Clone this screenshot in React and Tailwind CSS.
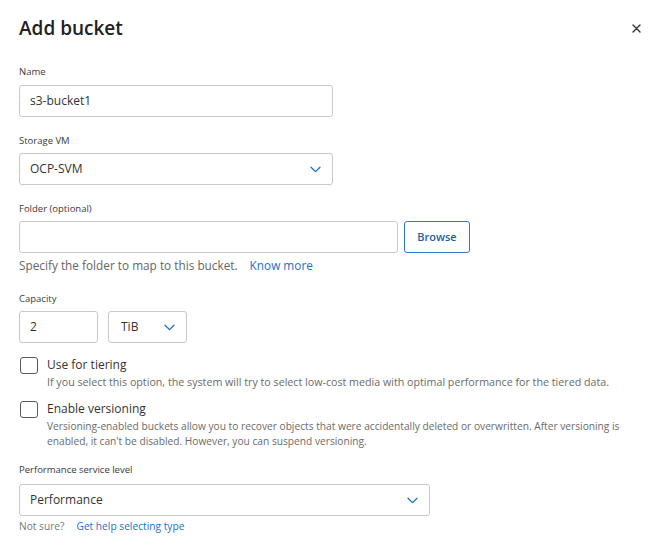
import React from "react";

function Chevron() {
  return (
    <svg width="11" height="7" viewBox="0 0 11 7" fill="none" className="shrink-0">
      <path d="M1 1.2 5.5 5.6 10 1.2" stroke="#1f6fbf" strokeWidth="1.3" strokeLinecap="round" strokeLinejoin="round" />
    </svg>
  );
}

function Label({ children, className = "" }) {
  return <div className={`text-[9.5px] leading-[14px] text-[#3b3b3b] ${className}`}>{children}</div>;
}

function Box({ className = "", children }) {
  return (
    <div className={`flex h-[32px] items-center rounded-[3px] border border-[#c9c9c9] bg-white px-[10px] text-[12px] text-[#333] ${className}`}>
      {children}
    </div>
  );
}

function Select({ value, className = "" }) {
  return (
    <Box className={`justify-between pr-[11px] ${className}`}>
      <span>{value}</span>
      <Chevron />
    </Box>
  );
}

function Check({ label, children, className = "", descClass = "text-[10.5px]" }) {
  return (
    <div className={`flex gap-[9px] pl-[1px] ${className}`}>
      <div className="mt-[2px] h-[17px] w-[18px] shrink-0 rounded-[3px] border border-[#5a5a5a] bg-white" />
      <div>
        <div className="text-[12px] leading-[20px] text-[#333]">{label}</div>
        <div className={`leading-[15px] text-[#6b6b6b] ${descClass}`}>{children}</div>
      </div>
    </div>
  );
}

export default function App() {
  return (
    <div
      className="h-[556px] w-[661px] bg-white pl-[19px] pr-[20px] pt-[15px]"
      style={{ fontFamily: '"Open Sans", "Noto Sans", sans-serif' }}
    >
      <div className="flex items-center justify-between">
        <h1 className="text-[19px] font-semibold leading-[26px] text-[#222]">Add bucket</h1>
        <svg width="9" height="9" viewBox="0 0 9 9">
          <path d="M1 1 8 8M8 1 1 8" stroke="#333" strokeWidth="1.4" strokeLinecap="round" />
        </svg>
      </div>

      <Label className="mt-[24px] mb-[6px]">Name</Label>
      <Box className="w-[314px]">s3-bucket1</Box>

      <Label className="mt-[17px] mb-[5px]">Storage VM</Label>
      <Select value="OCP-SVM" className="w-[314px]" />

      <Label className="mt-[17px] mb-[5px]">Folder (optional)</Label>
      <div className="flex gap-[6px]">
        <Box className="w-[379px]" />
        <button className="h-[32px] w-[66px] rounded-[3px] border border-[#2f7bc4] bg-white text-[11px] font-semibold text-[#1d5f9f]">
          Browse
        </button>
      </div>
      <div className="mt-[3px] flex gap-[12px] text-[11.8px] leading-[18px]">
        <span className="text-[#666]">Specify the folder to map to this bucket.</span>
        <span className="text-[#1f6fbf]">Know more</span>
      </div>

      <Label className="mt-[18px] mb-[5px]">Capacity</Label>
      <div className="flex gap-[10px]">
        <Box className="w-[79px]">2</Box>
        <Select value="TiB" className="w-[79px] pl-[12px]" />
      </div>

      <Check label="Use for tiering" className="mt-[12px]" descClass="text-[10.7px]">
        If you select this option, the system will try to select low-cost media with optimal performance for the tiered data.
      </Check>

      <Check label="Enable versioning" className="mt-[9px]" descClass="text-[10.2px]">
        Versioning-enabled buckets allow you to recover objects that were accidentally deleted or overwritten. After versioning is
        <br />
        enabled, it can't be disabled. However, you can suspend versioning.
      </Check>

      <Label className="mt-[14px] mb-[7px]">Performance service level</Label>
      <Select value="Performance" className="w-[411px]" />
      <div className="mt-[3px] flex gap-[12px] text-[10.2px] leading-[15px]">
        <span className="text-[#777]">Not sure?</span>
        <span className="text-[#1f6fbf]">Get help selecting type</span>
      </div>
    </div>
  );
}
